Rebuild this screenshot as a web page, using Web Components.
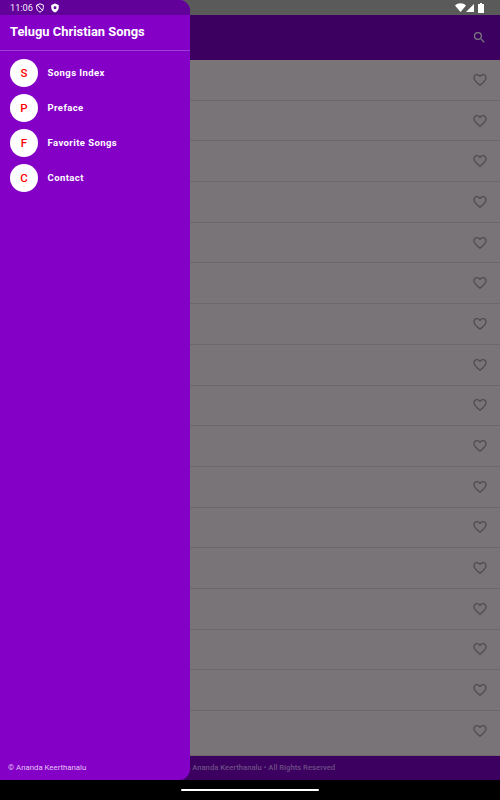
<!DOCTYPE html>
<html>
<head>
<meta charset="utf-8">
<title>Telugu Christian Songs</title>
<style>
  html, body { margin: 0; height: 100%; background: #000; font-family: Roboto, sans-serif; }
</style>
</head>
<body>
<song-app></song-app>

<script>
// Barra de estado: hora a la izquierda, iconos a la derecha
class StatusBar extends HTMLElement {
  constructor() {
    super();
    const shadow = this.attachShadow({ mode: 'open' });
    shadow.innerHTML = `
      <style>
        :host {
          position: absolute; top: 0; left: 0; right: 0; height: 15px; z-index: 3;
          display: flex; align-items: center; padding: 0 16.500px 0 10px; box-sizing: border-box;
          color: #fff; font: 400 9.200px/15px Roboto, sans-serif;
        }
        .time { margin-right: 2.500px; opacity: .92; }
        svg { display: block; }
        .gap { flex: 1; }
      </style>
      <span class="time">11:06</span>
      <svg width="10" height="10" viewBox="0 0 24 24" fill="none" stroke="#fff" stroke-width="2.4" style="margin-right:5px">
        <path d="M12 2l8 3v6c0 5-3.400 9-8 11-4.600-2-8-6-8-11V5z"/><path d="M6 5l13 14"/>
      </svg>
      <svg width="10" height="10" viewBox="0 0 24 24" fill="#fff">
        <path fill-rule="evenodd" d="M12 1l9 3.500V11c0 5.600-3.800 10.200-9 12-5.200-1.800-9-6.400-9-12V4.500zM12 8a3.500 3.500 0 1 0 0 7 3.500 3.500 0 0 0 0-7z"/>
      </svg>
      <span class="gap"></span>
      <svg width="11" height="9" viewBox="0 0 22 18" fill="#fff" style="margin-right:0"><path d="M0 5C6-1 16-1 22 5L11 18z"/></svg>
      <svg width="8" height="8" viewBox="0 0 18 18" fill="#fff" style="margin-right:4px"><path d="M18 0v18H0z"/></svg>
      <svg width="6" height="10" viewBox="0 0 12 20" fill="#fff"><path d="M4 0h4v2h3a1 1 0 0 1 1 1v16a1 1 0 0 1-1 1H1a1 1 0 0 1-1-1V3a1 1 0 0 1 1-1h3z"/></svg>
    `;
  }
}

// Barra superior de la pantalla con la lupa
class TopBar extends HTMLElement {
  constructor() {
    super();
    const shadow = this.attachShadow({ mode: 'open' });
    shadow.innerHTML = `
      <style>
        :host {
          display: flex; align-items: center; justify-content: flex-end;
          height: 45px; padding: 0 13px 1px 0; box-sizing: border-box; background: #3b0060; flex: none;
        }
        svg { display: block; }
      </style>
      <svg width="15" height="15" viewBox="0 0 24 24" fill="#7b787e">
        <path d="M15.500 14h-.79l-.28-.27A6.470 6.470 0 0 0 16 9.500 6.500 6.500 0 1 0 9.500 16c1.610 0 3.090-.59 4.230-1.570l.27.28v.79l5 4.990L20.490 19zm-6 0C7.010 14 5 11.990 5 9.500S7.010 5 9.500 5 14 7.010 14 9.500 11.990 14 9.500 14z"/>
      </svg>
    `;
  }
}

// Fila de canción (el título queda tapado por el menú)
class SongRow extends HTMLElement {
  constructor() {
    super();
    const shadow = this.attachShadow({ mode: 'open' });
    shadow.innerHTML = `
      <style>
        :host {
          display: flex; align-items: center; justify-content: flex-end; box-sizing: border-box;
          height: 40.700px; flex: none; padding-right: 12px; border-bottom: 1px solid #6b696c;
        }
        :host(:last-child) { border-bottom: none; }
        svg { display: block; }
      </style>
      <svg width="16" height="16" viewBox="0 0 24 24" fill="#4f4d50">
        <path d="M16.500 3c-1.740 0-3.410.81-4.500 2.090C10.910 3.810 9.240 3 7.500 3 4.420 3 2 5.420 2 8.500c0 3.780 3.400 6.860 8.550 11.540L12 21.350l1.450-1.320C18.600 15.360 22 12.280 22 8.500 22 5.420 19.580 3 16.500 3zm-4.400 15.550l-.1.100-.1-.1C7.140 14.240 4 11.390 4 8.500 4 6.500 5.500 5 7.500 5c1.540 0 3.040.99 3.570 2.360h1.870C13.460 5.990 14.960 5 16.500 5c2 0 3.500 1.500 3.500 3.500 0 2.890-3.140 5.740-7.900 10.050z"/>
      </svg>
    `;
  }
}

// Entrada del menú lateral: círculo con la inicial y texto
class DrawerItem extends HTMLElement {
  constructor() {
    super();
    const shadow = this.attachShadow({ mode: 'open' });
    shadow.innerHTML = `
      <style>
        :host { display: flex; align-items: center; height: 35px; padding-left: 10px; }
        .circle {
          width: 28px; height: 28px; border-radius: 50%; background: #fff; color: #f00;
          display: flex; align-items: center; justify-content: center;
          font: 500 11.500px Roboto, sans-serif; margin-right: 9.500px;
        }
        .label { color: #fff; font: 700 9.500px/12px Roboto, sans-serif; letter-spacing: .42px; padding-top: 1px; }
      </style>
      <span class="circle"></span>
      <span class="label"><slot></slot></span>
    `;
    shadow.querySelector('.circle').textContent = this.getAttribute('letter');
  }
}

// Menú lateral abierto sobre la pantalla
class SideDrawer extends HTMLElement {
  constructor() {
    super();
    const shadow = this.attachShadow({ mode: 'open' });
    shadow.innerHTML = `
      <style>
        :host {
          position: absolute; top: 0; left: 0; bottom: 20px; width: 190px; z-index: 2;
          display: flex; flex-direction: column;
          background: #8500c7; border-radius: 0 11px 11px 0; overflow: hidden;
        }
        .tint { height: 15px; background: #62009a; flex: none; }
        .title {
          height: 36px; box-sizing: border-box; padding: 0 10px 2px; flex: none;
          display: flex; align-items: center;
          color: #fff; font: 700 12.900px Roboto, sans-serif;
          border-bottom: 1px solid #9c3fd6;
        }
        .items { padding-top: 4px; flex: 1; }
        .foot { color: #e3c4f4; font: 400 7.800px Roboto, sans-serif; padding: 0 8px 8px; }
      </style>
      <div class="tint"></div>
      <div class="title">Telugu Christian Songs</div>
      <div class="items"><slot></slot></div>
      <div class="foot">© Ananda Keerthanalu</div>
    `;
  }
}

// Pantalla completa
class SongApp extends HTMLElement {
  constructor() {
    super();
    const shadow = this.attachShadow({ mode: 'open' });
    const rows = '<song-row></song-row>'.repeat(17);
    shadow.innerHTML = `
      <style>
        :host {
          display: flex; flex-direction: column; position: relative;
          width: 500px; height: 800px; background: #000; overflow: hidden;
        }
        .screen { flex: 1; display: flex; flex-direction: column; background: #5a5a5a; padding-top: 15px; min-height: 0; }
        .list { flex: 1; display: flex; flex-direction: column; background: #787478; min-height: 0; }
        .footer {
          height: 25px; flex: none; background: #3b0060; border-top: 1px solid #6b696c;
          display: flex; align-items: center; justify-content: center; box-sizing: border-box; padding-bottom: 2px;
          color: #6d4e85; font: 500 7.700px Roboto, sans-serif;
        }
        .nav { height: 20px; flex: none; display: flex; align-items: center; justify-content: center; }
        .handle { width: 138px; height: 2px; border-radius: 1px; background: #fff; }
      </style>
      <status-bar></status-bar>
      <div class="screen">
        <top-bar></top-bar>
        <div class="list">${rows}</div>
        <div class="footer">© 2024 Ananda Keerthanalu • All Rights Reserved</div>
      </div>
      <div class="nav"><div class="handle"></div></div>
      <side-drawer>
        <drawer-item letter="S">Songs Index</drawer-item>
        <drawer-item letter="P">Preface</drawer-item>
        <drawer-item letter="F">Favorite Songs</drawer-item>
        <drawer-item letter="C">Contact</drawer-item>
      </side-drawer>
    `;
  }
}

customElements.define('status-bar', StatusBar);
customElements.define('top-bar', TopBar);
customElements.define('song-row', SongRow);
customElements.define('drawer-item', DrawerItem);
customElements.define('side-drawer', SideDrawer);
customElements.define('song-app', SongApp);
</script>
</body>
</html>
